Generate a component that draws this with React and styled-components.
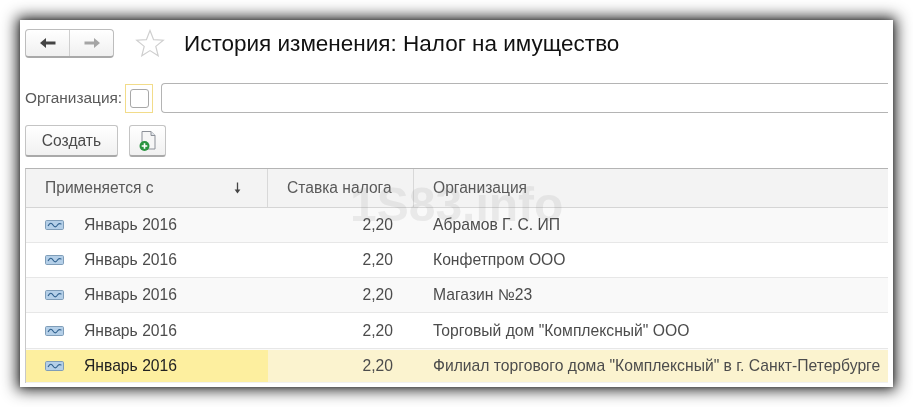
import React from "react";
import styled, { createGlobalStyle } from "styled-components";

const Global = createGlobalStyle`
  html, body { margin: 0; padding: 0; background: #fff; }
  body { width: 913px; height: 407px; overflow: hidden; font-family: "Liberation Sans", Arial, sans-serif; }
`;
const Page = styled.div`
  width: 913px; height: 407px; padding: 20px; box-sizing: border-box;
`;
const Shadowed = styled.div`
  width: 873px; height: 367px; box-shadow: 0 0 14px 3px rgba(0,0,0,.85), 0 0 4px rgba(0,0,0,.35);
`;
const Frame = styled.div`
  position: relative; width: 873px; height: 367px; background: #fff; box-sizing: border-box;
  padding: 8px 5px 5px 5px; display: flex; flex-direction: column; overflow: hidden;
  filter: blur(.35px);
`;
const Header = styled.div`
  display: flex; align-items: center; height: 30px;
`;
const NavGroup = styled.div`
  display: flex; width: 89px; height: 29px; box-sizing: border-box; border: 1px solid #bdbdbd;
  border-bottom: 2px solid #a9a9a9; border-radius: 4px; background: linear-gradient(#fff, #f0f0f0);
`;
const NavButton = styled.div`
  flex: 1; display: flex; align-items: center; justify-content: center;
  & + & { border-left: 1px solid #cfcfcf; }
`;
const StarBox = styled.div`
  margin-left: 21px; width: 30px; height: 30px; display: flex; align-items: center; justify-content: center;
`;
const Title = styled.h1`
  margin: 2px 0 0 19px; font-size: 22.5px; font-weight: 400; color: #111; line-height: 30px; white-space: nowrap;
`;
const FilterRow = styled.div`
  display: flex; align-items: center; margin-top: 25px; height: 30px;
`;
const Label = styled.span`
  font-size: 15.4px; color: #5a5a5a; width: 100px; white-space: nowrap;
`;
const CheckWrap = styled.div`
  width: 28px; height: 29px; box-sizing: border-box; border: 1px solid #f2dc8a; display: flex; align-items: center; justify-content: center;
`;
const Check = styled.div`
  width: 19px; height: 19px; box-sizing: border-box; border: 1px solid #a8a8a8; border-radius: 3px; background: #fff;
`;
const TextInput = styled.div`
  flex: 1; margin-left: 8px; height: 30px; box-sizing: border-box; border: 1px solid #b4b4b4; border-right: none;
  border-radius: 4px 0 0 4px; background: #fff;
`;
const Toolbar = styled.div`
  display: flex; gap: 11px; margin-top: 12px; height: 32px;
`;
const Button = styled.div`
  width: ${p => p.$w}px; height: 32px; box-sizing: border-box; border: 1px solid #c4c4c4; border-bottom: 2px solid #a9a9a9;
  border-radius: 3px; background: linear-gradient(#fff, #f1f1f1); display: flex; align-items: center; justify-content: center;
  font-size: 15.6px; color: #4a4a4a;
`;
const Table = styled.div`
  margin-top: 11px; border-top: 1px solid #b4b4b4; border-left: 1px solid #c8c8c8; display: flex; flex-direction: column;
`;
const HeadRow = styled.div`
  display: grid; grid-template-columns: 242px 146px 1fr; height: 38px; background: #f3f3f3; border-bottom: 1px solid #d5d5d5;
`;
const HeadCell = styled.div`
  display: flex; align-items: center; font-size: 15.6px; color: #595959; box-sizing: border-box;
  padding-left: ${p => p.$pl}px; padding-right: ${p => p.$pr || 0}px; justify-content: ${p => p.$between ? "space-between" : "flex-start"};
  ${p => p.$line ? "border-right: 1px solid #d8d8d8;" : ""}
`;
const Row = styled.div`
  display: grid; grid-template-columns: 242px 146px 1fr; height: ${p => p.$h}px; box-sizing: border-box;
  background: ${p => p.$active ? "#fbf3cf" : p.$alt ? "#f9f9f9" : "#fff"};
  border-bottom: 1px solid ${p => p.$active ? "#f1f1f1" : "#e7e7e7"};
  ${p => p.$active ? "border-top: 1px solid #fafafa;" : ""}
  font-size: 15.7px; color: #4c4c4c;
`;
const DateCell = styled.div`
  display: flex; align-items: center; padding-left: 19px; gap: 20px;
  background: ${p => p.$active ? "#fdef9f" : "transparent"};
  color: ${p => p.$active ? "#222" : "inherit"};
`;
const RateCell = styled.div`
  display: flex; align-items: center; justify-content: flex-end; padding-right: 21px;
`;
const OrgCell = styled.div`
  display: flex; align-items: center; padding-left: 19px; white-space: nowrap;
`;
const Watermark = styled.div`
  position: absolute; left: 330px; top: 160px; font-size: 48px; font-weight: 700; color: rgba(120,120,120,.12);
  line-height: 50px; white-space: nowrap; pointer-events: none;
`;

const LeftArrow = ({ c }) => (
  <svg width="18" height="14" viewBox="0 0 18 14"><path d="M1 7 7 2v3.4h9.5v3.2H7V12z" fill={c} /></svg>
);
const RightArrow = ({ c }) => (
  <svg width="18" height="14" viewBox="0 0 18 14"><path d="M17 7 11 2v3.4H1.5v3.2H11V12z" fill={c} /></svg>
);
const Star = () => (
  <svg width="30" height="28" viewBox="0 0 30 28">
    <path d="M15 1.5 18.6 10.6 28.3 11.2 20.8 17.4 23.2 26.8 15 21.6 6.8 26.8 9.2 17.4 1.7 11.2 11.4 10.6z" fill="#fff" stroke="#cfcfcf" strokeWidth="1.2" />
  </svg>
);
const NewDoc = () => (
  <svg width="20" height="23" viewBox="0 0 20 23">
    <path d="M4 2.5h9l4 4v13.5H4z" fill="#f6f6f6" stroke="#8c9098" />
    <path d="M13 2.5V6.5h4" fill="#dfe3e8" stroke="#8c9098" />
    <circle cx="6.5" cy="17" r="5" fill="#2a9440" />
    <path d="M6.5 14.2v5.6M3.7 17h5.6" stroke="#fff" strokeWidth="1.6" />
  </svg>
);
const SortArrow = () => (
  <svg width="9" height="12" viewBox="0 0 9 12"><path d="M4.5 0.5v8" stroke="#444" strokeWidth="1.3" /><path d="M1.6 7.4h5.8L4.5 11.5z" fill="#444" /></svg>
);
const RegIcon = () => (
  <svg width="19" height="10" viewBox="0 0 19 10">
    <rect x=".5" y=".5" width="18" height="9" rx="1.2" fill="#b4cfe8" stroke="#7f9db8" />
    <path d="M3 6C5 2.5 6.5 2.5 8 5s3 2.5 4.5 0S15 4 16.5 4" fill="none" stroke="#2e5f8c" strokeWidth="1.1" />
  </svg>
);

const rows = [
  { org: "Абрамов Г. С. ИП", h: 35, alt: true },
  { org: "Конфетпром ООО", h: 35 },
  { org: "Магазин №23", h: 35, alt: true },
  { org: 'Торговый дом "Комплексный" ООО', h: 36 },
  { org: 'Филиал торгового дома "Комплексный" в г. Санкт-Петербурге', h: 34, active: true },
];

export default function App() {
  return (
    <Page>
      <Global />
      <Shadowed>
        <Frame>
          <Header>
            <NavGroup>
              <NavButton><LeftArrow c="#444" /></NavButton>
              <NavButton><RightArrow c="#a5a5a5" /></NavButton>
            </NavGroup>
            <StarBox><Star /></StarBox>
            <Title>История изменения: Налог на имущество</Title>
          </Header>
          <FilterRow>
            <Label>Организация:</Label>
            <CheckWrap><Check /></CheckWrap>
            <TextInput />
          </FilterRow>
          <Toolbar>
            <Button $w={93}>Создать</Button>
            <Button $w={37}><NewDoc /></Button>
          </Toolbar>
          <Table>
            <HeadRow>
              <HeadCell $pl={19} $pr={25} $between $line>Применяется с<SortArrow /></HeadCell>
              <HeadCell $pl={19} $line>Ставка налога</HeadCell>
              <HeadCell $pl={19}>Организация</HeadCell>
            </HeadRow>
            {rows.map(r => (
              <Row key={r.org} $h={r.h} $alt={r.alt} $active={r.active}>
                <DateCell $active={r.active}><RegIcon />Январь 2016</DateCell>
                <RateCell>2,20</RateCell>
                <OrgCell>{r.org}</OrgCell>
              </Row>
            ))}
          </Table>
          <Watermark>1S83.info</Watermark>
        </Frame>
      </Shadowed>
    </Page>
  );
}
